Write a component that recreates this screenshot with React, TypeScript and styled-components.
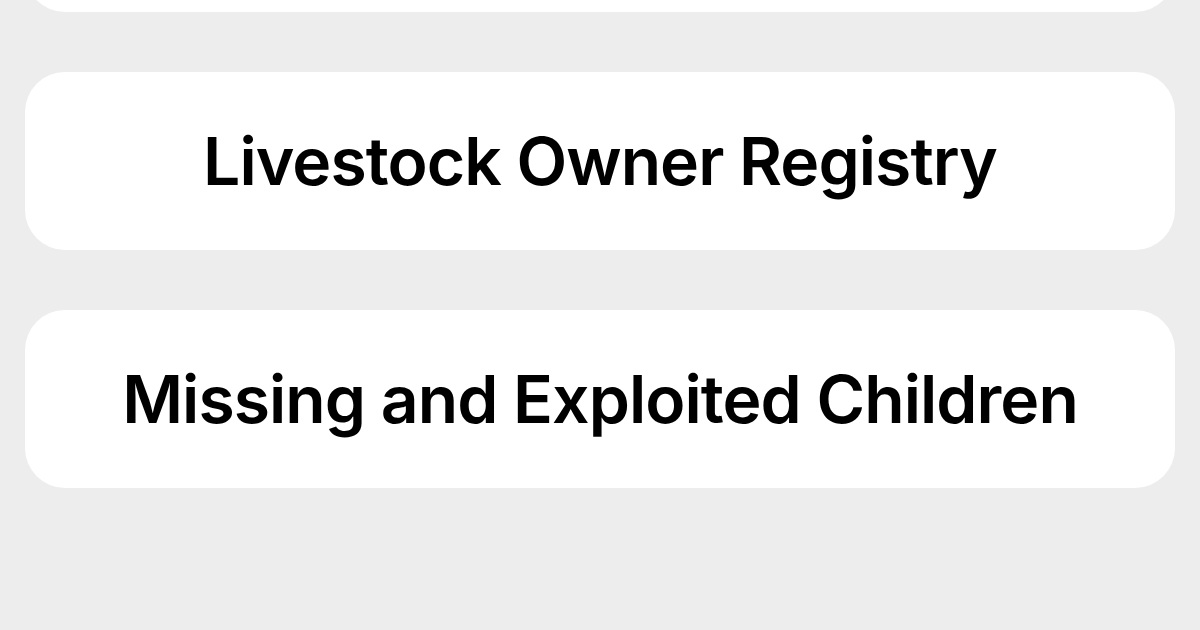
import styled, { createGlobalStyle } from "styled-components";

const GlobalStyle = createGlobalStyle`
    html, body {
        margin: 0;
        padding: 0;
        background-color: #ededed;
        font-family: Inter, "Noto Sans", "Liberation Sans", sans-serif;
        -webkit-font-smoothing: antialiased;
    }
`;

const registries = ["", "Livestock Owner Registry", "Missing and Exploited Children"];

const App = () => {
    return (
        <>
            <GlobalStyle />
            <StyledPage>
                <StyledList>
                    {registries.map((title, index) => (
                        <StyledCard key={index} type="button">
                            {title}
                        </StyledCard>
                    ))}
                </StyledList>
            </StyledPage>
        </>
    );
};

const StyledPage = styled.main`
    width: 1200px;
    height: 630px;
    overflow: hidden;
    background-color: #ededed;
`;

// list is scrolled so only the bottom of the first card shows
const StyledList = styled.div`
    display: flex;
    flex-direction: column;
    gap: 60px;
    padding: 0 25px;
    margin-top: -166px;
`;

const StyledCard = styled.button`
    display: flex;
    align-items: center;
    justify-content: center;
    height: 178px;
    border: none;
    border-radius: 40px;
    background-color: #ffffff;
    color: #000000;
    font-family: inherit;
    font-size: 66px;
    font-weight: 600;
    letter-spacing: -0.95px;
    cursor: pointer;
`;

export default App;
